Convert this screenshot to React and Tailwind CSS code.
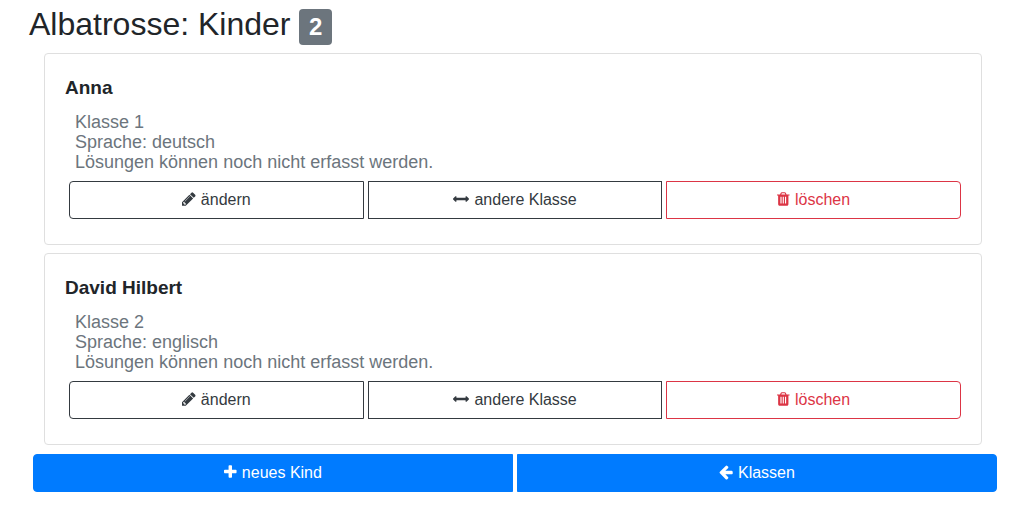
const ICONS = {
  pencil: {
    box: "128 0 1536 1792",
    size: "w-[13.71px]",
    d: "M491 1536l91-91-235-235-91 91v107h128v128h107zm523-928q0-22-22-22-10 0-17 7l-542 542q-7 7-7 17 0 22 22 22 10 0 17-7l542-542q7-7 7-17zm-54-192l416 416-832 832h-416v-416zm683 96q0 53-37 90l-166 166-416-416 166-165q36-38 90-38 53 0 91 38l235 234q37 39 37 91z",
  },
  arrows: {
    box: "0 0 1792 1792",
    size: "w-4",
    d: "M1792 896q0 26-19 45l-256 256q-19 19-45 19t-45-19-19-45v-128h-1024v128q0 26-19 45t-45 19-45-19l-256-256q-19-19-19-45t19-45l256-256q19-19 45-19t45 19 19 45v128h1024v-128q0-26 19-45t45-19 45 19l256 256q19 19 19 45z",
  },
  trash: {
    box: "192 0 1408 1792",
    size: "w-[12.57px]",
    d: "M704 1376v-704q0-14-9-23t-23-9h-64q-14 0-23 9t-9 23v704q0 14 9 23t23 9h64q14 0 23-9t9-23zm256 0v-704q0-14-9-23t-23-9h-64q-14 0-23 9t-9 23v704q0 14 9 23t23 9h64q14 0 23-9t9-23zm256 0v-704q0-14-9-23t-23-9h-64q-14 0-23 9t-9 23v704q0 14 9 23t23 9h64q14 0 23-9t9-23zm-544-992h448l-48-117q-7-9-17-11h-317q-10 2-17 11zm928 32v64q0 14-9 23t-23 9h-96v948q0 83-47 143.5t-113 60.5h-832q-66 0-113-58.5t-47-141.5v-952h-96q-14 0-23-9t-9-23v-64q0-14 9-23t23-9h309l70-167q15-37 54-63t79-26h320q40 0 79 26t54 63l70 167h309q14 0 23 9t9 23z",
  },
  plus: {
    box: "192 0 1408 1792",
    size: "w-[12.57px]",
    d: "M1600 736v192q0 40-28 68t-68 28h-416v416q0 40-28 68t-68 28h-192q-40 0-68-28t-28-68v-416h-416q-40 0-68-28t-28-68v-192q0-40 28-68t68-28h416v-416q0-40 28-68t68-28h192q40 0 68 28t28 68v416h416q40 0 68 28t28 68z",
  },
  left: {
    box: "128 0 1536 1792",
    size: "w-[13.71px]",
    d: "M1664 896v128q0 53-32.5 90.5t-84.5 37.5h-704l293 294q38 36 38 90t-38 90l-75 76q-37 37-90 37-52 0-91-37l-651-652q-37-37-37-90 0-52 37-91l651-650q38-38 91-38 52 0 90 38l75 74q38 38 38 91t-38 91l-293 293h704q52 0 84.5 37.5t32.5 90.5z",
  },
};

function Icon({ name }) {
  const { box, size, d } = ICONS[name];
  return (
    <svg viewBox={box} className={`mb-[1.4px] inline-block h-4 shrink-0 fill-current ${size}`} aria-hidden="true">
      <path d={d} />
    </svg>
  );
}

function Button({ icon, label, className }) {
  return (
    <button
      className={`flex h-[38px] min-w-0 flex-1 items-center justify-center gap-[5.2px] border text-base leading-6 ${className}`}
    >
      <Icon name={icon} />
      <span>{label}</span>
    </button>
  );
}

function ChildCard({ name, grade, language }) {
  return (
    <article className="h-48 rounded border border-[#dfdfdf] px-5 pt-5">
      <h2 className="h-[38px] pt-[2px] text-[19px] leading-[23px] font-bold">{name}</h2>
      <div className="pl-[10px] text-[18px] leading-5 text-[#6c757d]">
        <p>Klasse {grade}</p>
        <p>Sprache: {language}</p>
        <p>Lösungen können noch nicht erfasst werden.</p>
      </div>
      <div className="mt-[9px] flex gap-1 pl-1">
        <Button icon="pencil" label="ändern" className="rounded-l border-[#343a40] text-[#343a40]" />
        <Button icon="arrows" label="andere Klasse" className="border-[#343a40] text-[#343a40]" />
        <Button icon="trash" label="löschen" className="rounded-r border-[#dc3545] text-[#dc3545]" />
      </div>
    </article>
  );
}

export default function App() {
  return (
    <main className="h-[523px] overflow-hidden bg-white font-['Liberation_Sans',Arial,sans-serif] text-[#212529]">
      <h1 className="h-[53px] pt-[5px] pl-[29px] text-[32px] leading-[38.4px]">
        Albatrosse: Kinder{" "}
        <span className="inline-block rounded bg-[#6c757d] px-[9.6px] py-[6px] align-baseline text-2xl leading-none font-bold text-white">
          2
        </span>
      </h1>
      <section className="mr-7 ml-11 flex flex-col gap-2">
        <ChildCard name="Anna" grade="1" language="deutsch" />
        <ChildCard name="David Hilbert" grade="2" language="englisch" />
      </section>
      <nav className="mt-[9px] mr-[13px] ml-[33px] flex gap-1">
        <Button icon="plus" label="neues Kind" className="rounded-l border-[#007bff] bg-[#007bff] text-white" />
        <Button icon="left" label="Klassen" className="rounded-r border-[#007bff] bg-[#007bff] text-white" />
      </nav>
    </main>
  );
}
